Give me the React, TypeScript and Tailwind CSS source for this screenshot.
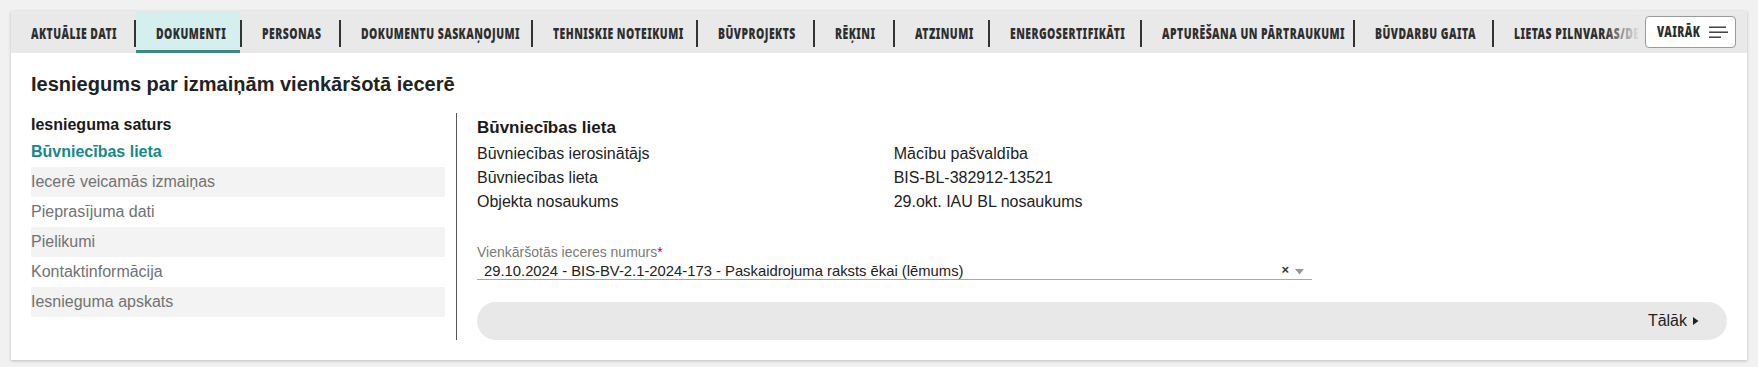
import React from "react";

const tabs: { t: string; w: string }[] = [
  { t: "AKTUĀLIE DATI", w: "w-[123px]" },
  { t: "DOKUMENTI", w: "w-[104.5px]" },
  { t: "PERSONAS", w: "w-[97.5px]" },
  { t: "DOKUMENTU SASKAŅOJUMI", w: "w-[190.5px]" },
  { t: "TEHNISKIE NOTEIKUMI", w: "w-[163.5px]" },
  { t: "BŪVPROJEKTS", w: "w-[115.5px]" },
  { t: "RĒĶINI", w: "w-[78.5px]" },
  { t: "ATZINUMI", w: "w-[93.5px]" },
  { t: "ENERGOSERTIFIKĀTI", w: "w-[150.5px]" },
  { t: "APTURĒŠANA UN PĀRTRAUKUMI", w: "w-[211.5px]" },
  { t: "BŪVDARBU GAITA", w: "w-[137.5px]" },
  { t: "LIETAS PILNVARAS/DELEĢĒJUMI", w: "w-[150px] overflow-hidden" },
];

const navItems = [
  "Iecerē veicamās izmaiņas",
  "Pieprasījuma dati",
  "Pielikumi",
  "Kontaktinformācija",
  "Iesnieguma apskats",
];

const rows: [string, string][] = [
  ["Būvniecības ierosinātājs", "Mācību pašvaldība"],
  ["Būvniecības lieta", "BIS-BL-382912-13521"],
  ["Objekta nosaukums", "29.okt. IAU BL nosaukums"],
];

const tabFont =
  "inline-block shrink-0 whitespace-nowrap origin-left scale-x-[0.67] font-['Noto_Sans',sans-serif] font-black text-[15.5px] leading-none tracking-[0.7px] text-[#2e2e2e]";

export default function App() {
  return (
    <div className="min-h-[367px] bg-[#f1f1f1] p-[11px] pb-[8px] font-['Liberation_Sans',Arial,sans-serif]">
      <div className="bg-white shadow-[0_1px_3px_rgba(0,0,0,0.22)]">
        {/* Tab bar */}
        <div className="relative h-[42px] bg-[#e9e9e9] overflow-hidden">
          <div className="flex h-full items-stretch">
            {tabs.map((tab, i) => (
              <React.Fragment key={tab.t}>
                {i > 0 && <div className="w-[1.5px] h-[27px] bg-[#333] self-end mb-[6px] shrink-0" />}
                <div
                  className={
                    tab.w +
                    " shrink-0 flex items-center pl-[20px] pt-[6px] border-b-[3px] " +
                    (i === 1 ? "bg-[#d5eeee] border-[#3d8885]" : "border-transparent")
                  }
                >
                  <span className={tabFont}>{tab.t}</span>
                </div>
              </React.Fragment>
            ))}
          </div>
          <div className="absolute right-[107px] top-0 h-full w-[36px] bg-gradient-to-r from-[rgba(233,233,233,0)] to-[#e9e9e9]" />
          <div className="absolute right-0 top-0 h-full w-[107px] bg-[#e9e9e9]" />
          <button className="absolute right-[11px] top-[5px] h-[32px] w-[91px] bg-white border border-[#9a9a9a] rounded-[4px] flex items-center pl-[11px] overflow-hidden">
            <span className="w-[52px] shrink-0 flex items-center overflow-visible">
              <span className={tabFont}>VAIRĀK</span>
            </span>
            <svg width="19" height="13" viewBox="0 0 19 13" className="ml-auto mr-[9px] mt-[1px] shrink-0">
              <rect x="0" y="0.5" width="17" height="1.4" fill="#333" />
              <rect x="0" y="5.5" width="19" height="1.4" fill="#333" />
              <rect x="0" y="10.5" width="12" height="1.4" fill="#333" />
            </svg>
          </button>
        </div>

        {/* Body */}
        <div className="px-5 pt-[17px] pb-5">
          <h1 className="text-[20px] leading-[28px] font-bold text-[#222]">
            Iesniegums par izmaiņām vienkāršotā iecerē
          </h1>
          <div className="flex mt-[15px]">
            {/* Left nav */}
            <div className="w-[414px] shrink-0">
              <div className="text-[16px] leading-6 font-bold text-[#1a1a1a]">Iesnieguma saturs</div>
              <div className="h-[30px] flex items-center text-[16px] font-bold text-[#16898a]">Būvniecības lieta</div>
              {navItems.map((n, i) => (
                <div
                  key={n}
                  className={
                    "h-[30px] flex items-center text-[16px] text-[#727272] " +
                    (i % 2 === 0 ? "bg-[#f3f3f3]" : "bg-white")
                  }
                >
                  {n}
                </div>
              ))}
            </div>

            {/* Right panel */}
            <div className="ml-[11px] flex-1 border-l border-[#555] pl-5">
              <div className="text-[17px] leading-[29px] font-bold text-[#1a1a1a]">Būvniecības lieta</div>
              <div className="grid grid-cols-[1fr_2fr] text-[16px] leading-6 text-[#222]">
                {rows.map(([l, v]) => (
                  <React.Fragment key={l}>
                    <div>{l}</div>
                    <div>{v}</div>
                  </React.Fragment>
                ))}
              </div>

              <div className="w-[835px] mt-[28px]">
                <div className="text-[14px] leading-5 text-[#7a7a7a]">
                  Vienkāršotās ieceres numurs<span className="text-[#d0021b]">*</span>
                </div>
                <div className="flex items-center h-[18px] border-b border-[#a8a8a8] pl-[7px] pr-[8px]">
                  <span className="flex-1 text-[14.8px] leading-[18px] text-[#222] truncate">
                    29.10.2024 - BIS-BV-2.1-2024-173 - Paskaidrojuma raksts ēkai (lēmums)
                  </span>
                  <span className="text-[13px] font-bold leading-none text-[#333] mr-[6px] -mt-[3px]">×</span>
                  <svg width="9" height="6" viewBox="0 0 9 6" className="mt-[3px]">
                    <polygon points="0,0 9,0 4.5,5.5" fill="#999" />
                  </svg>
                </div>
              </div>

              <div className="mt-[22px] h-[38px] rounded-full bg-[#e8e8e8] flex items-center justify-end pr-[28px]">
                <span className="text-[16px] text-[#222]">Tālāk</span>
                <svg width="6" height="8" viewBox="0 0 6 8" className="ml-[6px]">
                  <polygon points="0,0 5.5,4 0,8" fill="#222" />
                </svg>
              </div>
            </div>
          </div>
        </div>
      </div>
    </div>
  );
}
